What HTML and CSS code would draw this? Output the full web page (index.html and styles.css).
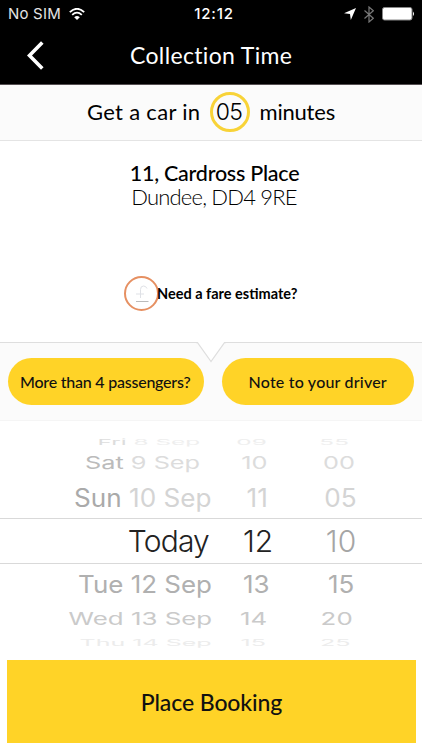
FILE: index.html
```html
<!DOCTYPE html>
<html lang="en">
<head>
<meta charset="utf-8">
<title>Collection Time</title>
<link rel="stylesheet" href="styles.css">
</head>
<body>
<header class="header">
  <div class="status">
    <div class="carrier"><span>No SIM</span>
      <svg width="16" height="12" viewBox="0 0 16 12" fill="none" stroke="#fff" stroke-width="1.8"><path d="M.8 4.2Q8-2.6 15.2 4.2M3.2 6.8Q8 2.4 12.8 6.8"/><path d="M8 12 5.2 9.2Q8 6.8 10.8 9.2Z" fill="#fff" stroke="none"/></svg>
    </div>
    <div class="clock">12:12</div>
    <div class="indicators">
      <svg width="12" height="12" viewBox="0 0 12 12"><path d="M12 0 6.8 12 6 6 0 5.2Z" fill="#fff"/></svg>
      <svg width="10" height="17" viewBox="0 0 10 17"><path d="M.5 4.5 9.3 12.2 5 16V1L9.3 4.8.5 12.5" fill="none" stroke="#777" stroke-width="1.2"/></svg>
      <svg width="33" height="14" viewBox="0 0 33 14"><rect x=".5" y=".5" width="29.5" height="12.5" rx="2" fill="#fff" stroke="#888"/><path d="M31 4.5q2 2.3 0 4.5Z" fill="#fff"/></svg>
    </div>
  </div>
  <div class="nav">
    <svg class="back" width="18" height="29" viewBox="0 0 18 29"><path d="M15.3 1.5 2.5 14.5 15.3 27.5" fill="none" stroke="#fff" stroke-width="3.6"/></svg>
    <h1 class="title">Collection Time</h1>
  </div>
</header>
<section class="eta"><span class="eta-lead">Get a car in</span><span class="eta-num">05</span><span class="eta-unit">minutes</span></section>
<section class="pickup">
  <div class="street">11, Cardross Place</div>
  <div class="city">Dundee, DD4 9RE</div>
  <div class="fare">
    <span class="pound"><svg width="14" height="18" viewBox="0 0 14 18" fill="none" stroke="#dfe1e6" stroke-width="1"><path d="M12 3.5Q11 1 8.5 1 5.5 1 5.5 4.5V13M1 9H9"/><path d="M1 16.5H13.5" stroke="#bbb"/></svg></span>
    <span class="fare-text">Need a fare estimate?</span>
  </div>
</section>
<section class="options">
  <svg class="notch" width="30" height="21" viewBox="0 0 30 21"><path d="M1 0H29V1L15 19.5 1 1Z" fill="#fff"/><path d="M0 .6H1.5L15 19.5 28.5.6H30" fill="none" stroke="#dedede" stroke-width="1.2"/></svg>
  <button class="pill pill-left"><span>More than 4 passengers?</span></button>
  <button class="pill pill-right"><span>Note to your driver</span></button>
</section>
<section class="picker">
  <div class="row r1"><div class="date"><span><b>Fri</b> 8 Sep</span></div><div class="hour"><span>09</span></div><div class="min"><span>55</span></div></div>
  <div class="row r2"><div class="date"><span><b>Sat</b> 9 Sep</span></div><div class="hour"><span>10</span></div><div class="min"><span>00</span></div></div>
  <div class="row r3"><div class="date"><span><b>Sun</b> 10 Sep</span></div><div class="hour"><span>11</span></div><div class="min"><span>05</span></div></div>
  <div class="row r4"><div class="date"><span>Today</span></div><div class="hour"><span>12</span></div><div class="min"><span>10</span></div></div>
  <div class="row r5"><div class="date"><span>Tue 12 Sep</span></div><div class="hour"><span>13</span></div><div class="min"><span>15</span></div></div>
  <div class="row r6"><div class="date"><span>Wed 13 Sep</span></div><div class="hour"><span>14</span></div><div class="min"><span>20</span></div></div>
  <div class="row r7"><div class="date"><span>Thu 14 Sep</span></div><div class="hour"><span>15</span></div><div class="min"><span>25</span></div></div>
</section>
<button class="book"><span>Place Booking</span></button>
</body>
</html>
```
FILE: styles.css
```css
* { box-sizing: border-box; }
body { margin: 0; width: 422px; height: 750px; overflow: hidden; background: #fff; color: #000; font-family: Lato, sans-serif; display: flex; flex-direction: column; }
svg { display: block; flex: none; }
button { border: 0; padding: 0; margin: 0; background: #ffd327; color: #111; font-family: Lato, sans-serif; }
span { white-space: nowrap; }
.header { height: 85px; flex: none; background: #000; color: #fff; border-bottom: 1px solid #554f52; }
.status { height: 28px; display: grid; grid-template-columns: 1fr auto 1fr; align-items: center; padding: 0 7px 0 8px; font: 15px/28px Inter, sans-serif; }
.carrier { display: flex; align-items: center; gap: 8px; color: #e4e4e4; letter-spacing: .2px; }
.clock { font-weight: 500; letter-spacing: .8px; padding-left: 5px; }
.indicators { display: flex; justify-content: flex-end; align-items: center; gap: 8px; }
.nav { height: 55px; display: flex; align-items: center; padding-left: 27px; }
.title { margin: 0 0 0 85px; font-size: 23px; font-weight: 400; letter-spacing: .35px; line-height: 55px; }
.eta { height: 56px; flex: none; background: #fbfbfb; border-bottom: 1px solid #e4e4e4; display: flex; align-items: center; padding: 0 0 2px 87px; font-size: 22px; }
.eta-lead { width: 114.5px; letter-spacing: .3px; }
.eta-lead, .eta-unit { padding-bottom: 1px; }
.eta-unit { letter-spacing: -.2px; }
.eta-num { width: 40px; height: 40px; margin: 0 10px 0 8px; border: 3px solid #f8d338; border-radius: 50%; display: flex; align-items: center; justify-content: center; font: 300 23px Inter, sans-serif; letter-spacing: -.8px; padding-right: 1px; }
.pickup { height: 201px; flex: none; padding-top: 21px; text-align: center; }
.street { font-size: 21.5px; font-weight: 500; line-height: 23px; padding-left: 7px; letter-spacing: -.25px; }
.city { font-size: 22px; font-weight: 300; line-height: 24px; padding-left: 6px; letter-spacing: -.8px; }
.fare { display: flex; align-items: center; margin-top: 67px; padding-left: 124px; height: 35px; }
.pound { width: 35px; height: 35px; border: 2px solid #e69062; border-radius: 50%; display: flex; align-items: center; justify-content: center; }
.fare-text { font-size: 14.5px; font-weight: 700; margin-left: -2px; }
.options { position: relative; height: 79px; flex: none; background: #fbfbfb; border-top: 1px solid #dedede; border-bottom: 1px solid #f5f5f5; display: flex; gap: 18px; padding: 15px 8px 0; }
.notch { position: absolute; left: 196px; top: -1px; }
.pill { height: 47px; border-radius: 24px; font-size: 16px; font-weight: 500; padding-bottom: 1px; }
.pill-left { width: 195.5px; letter-spacing: -.23px; padding-right: 1px; }
.pill-right { width: 192.5px; letter-spacing: .2px; }
.picker { height: 239px; flex: none; padding-top: 11px; font-family: Inter, sans-serif; color: #c9c9c9; }
.row { display: grid; grid-template-columns: 212px 88px 80px; align-items: center; line-height: 1; }
.row span { display: inline-block; }
.row b { font-weight: 400; color: #aaa; }
.date { text-align: right; }
.date span { transform-origin: right center; }
.hour, .min { text-align: center; }
.r1 { height: 18px; font-size: 20px; color: #eee; }
.r1 b { color: #ddd; }
.r1 span { transform: scale(1.22, .38); }
.r1 .date, .r2 .date { padding-right: 12px; }
.r1 .hour { padding-right: 9px; }
.r1 .min { padding-right: 12px; }
.r2 { height: 26px; font-size: 22px; color: #dcdcdc; }
.r2 b { color: #bbb; }
.r2 span { transform: scale(1.15, .78); }
.r2 .hour { padding-right: 4px; }
.r2 .min { padding-right: 3px; }
.r3 { height: 42px; padding-top: 3px; font-size: 25px; color: #d4d4d4; }
.r3 span { transform: scaleX(1.045); }
.r3 .hour { padding-left: 2px; }
.r4 { height: 46px; font-size: 30px; font-weight: 350; color: #222; border: solid #d9d9d9; border-width: 1px 0; }
.r4 .date { padding-right: 3px; letter-spacing: -.8px; }
.r4 .hour { padding-left: 4px; }
.r4 .min { color: #a5a5a5; padding-left: 2px; }
.r5 { height: 41px; font-size: 24px; color: #b0b0b0; }
.r5 span { transform: scaleX(1.08); }
.r5 .min { padding-left: 2px; }
.r6 { height: 28px; font-size: 22px; color: #cacaca; }
.r6 span { transform: scale(1.175, .78); }
.r6 .hour { padding-right: 4px; }
.r6 .min { padding-right: 6px; }
.r7 { height: 16px; font-size: 20px; color: #ececec; }
.r7 span { transform: scale(1.25, .42); }
.r7 .hour { padding-right: 6px; }
.r7 .min { padding-right: 10px; }
.book { width: 409px; height: 83px; margin-left: 7px; flex: none; font-size: 23px; font-weight: 500; letter-spacing: -.1px; }
```
